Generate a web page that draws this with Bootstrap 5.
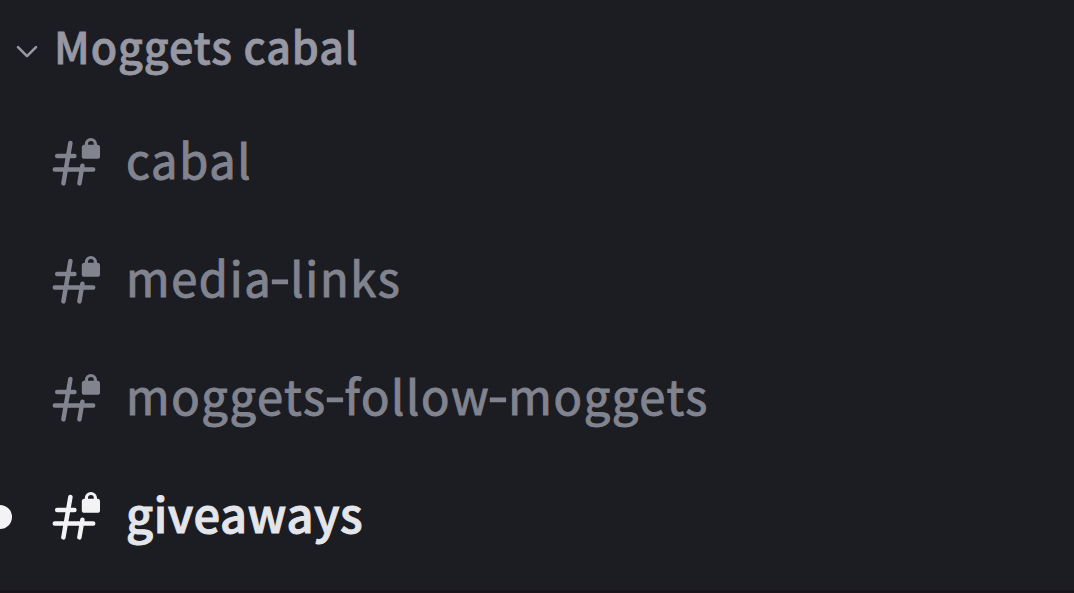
<!DOCTYPE html>
<html lang="en">
<head>
    <meta charset="UTF-8">
    <meta name="viewport" content="width=device-width, initial-scale=1.0">
    <title>Moggets cabal</title>
    <!-- Bootstrap CSS -->
    <link href="https://cdn.jsdelivr.net/npm/bootstrap@5.3.3/dist/css/bootstrap.min.css" rel="stylesheet">
    <!-- Custom CSS -->
    <style>
        body {
            background-color: #1c1d22;
            font-family: 'Noto Sans CJK SC', 'Noto Sans CJK JP', sans-serif;
            color: #81838f;
            height: 593px;
        }
        .channel-sidebar {
            height: 593px;
            border-bottom: 3px solid #191519;
        }
        .category-header {
            height: 103px;
            padding-left: 15px;
            color: #9798a4;
        }
        .category-arrow {
            width: 24px;
            height: 16px;
            margin-right: 15px;
        }
        .category-name {
            font-size: 43px;
            font-weight: 500;
            line-height: 98px;
            letter-spacing: 0.95px;
            margin-top: -13px;
            -webkit-text-stroke: 0.8px currentColor;
        }
        .channel-row {
            height: 118px;
            color: #81838f;
        }
        .unread-slot {
            width: 52px;
        }
        .unread-pill {
            width: 12px;
            height: 24px;
            margin-top: 2px;
            background-color: #f3f3f6;
            border-radius: 0 12px 12px 0;
        }
        .channel-icon {
            width: 50px;
            height: 50px;
            margin-right: 24px;
        }
        .channel-name {
            font-size: 47px;
            line-height: 118px;
            letter-spacing: 1.65px;
            margin-top: -7px;
            -webkit-text-stroke: 1px currentColor;
        }
        /* wide, raised hyphen */
        .dash {
            display: inline-block;
            transform: translateY(-3px) scale(1.25, 1.1);
        }
        .channel-row.unread {
            color: #f3f3f6;
        }
        .unread .channel-name {
            color: #e4e5ea;
            font-weight: 500;
            letter-spacing: 0.5px;
        }
    </style>
</head>
<body>
    <!-- Icons -->
    <svg class="d-none">
        <symbol id="hash-lock" viewBox="0 0 50 50">
            <g fill="none" stroke="currentColor" stroke-width="4.5" stroke-linecap="round">
                <path d="M5.2 19H22.4M2.8 32.6H41.2M18.4 6L11.4 46.4M30.4 28.8L27.4 46.4"/>
            </g>
            <rect x="29.8" y="7.8" width="18.2" height="14" rx="2.6" fill="currentColor"/>
            <path d="M34.4 10.4V7a4.5 4.5 0 0 1 9 0V10.4" fill="none" stroke="currentColor" stroke-width="3.2"/>
        </symbol>
    </svg>

    <div class="channel-sidebar overflow-hidden">
        <!-- Category -->
        <div class="category-header d-flex align-items-center">
            <svg class="category-arrow" viewBox="0 0 24 16" fill="none" stroke="currentColor" stroke-width="2.6" stroke-linecap="round" stroke-linejoin="round">
                <path d="M3 3.2L12 12.2L21 3.2"/>
            </svg>
            <span class="category-name text-nowrap">Moggets cabal</span>
        </div>

        <!-- Channels -->
        <ul class="list-unstyled mb-0">
            <li class="channel-row d-flex align-items-center">
                <div class="unread-slot"></div>
                <svg class="channel-icon"><use href="#hash-lock"/></svg>
                <span class="channel-name text-nowrap">cabal</span>
            </li>
            <li class="channel-row d-flex align-items-center">
                <div class="unread-slot"></div>
                <svg class="channel-icon"><use href="#hash-lock"/></svg>
                <span class="channel-name text-nowrap">media<span class="dash">-</span>links</span>
            </li>
            <li class="channel-row d-flex align-items-center">
                <div class="unread-slot"></div>
                <svg class="channel-icon"><use href="#hash-lock"/></svg>
                <span class="channel-name text-nowrap">moggets<span class="dash">-</span>follow<span class="dash">-</span>moggets</span>
            </li>
            <li class="channel-row unread d-flex align-items-center">
                <div class="unread-slot"><div class="unread-pill"></div></div>
                <svg class="channel-icon"><use href="#hash-lock"/></svg>
                <span class="channel-name text-nowrap">giveaways</span>
            </li>
        </ul>
    </div>

    <!-- Bootstrap JS and Popper.js -->
    <script src="https://cdn.jsdelivr.net/npm/bootstrap@5.3.3/dist/js/bootstrap.bundle.min.js"></script>
</body>
</html>
